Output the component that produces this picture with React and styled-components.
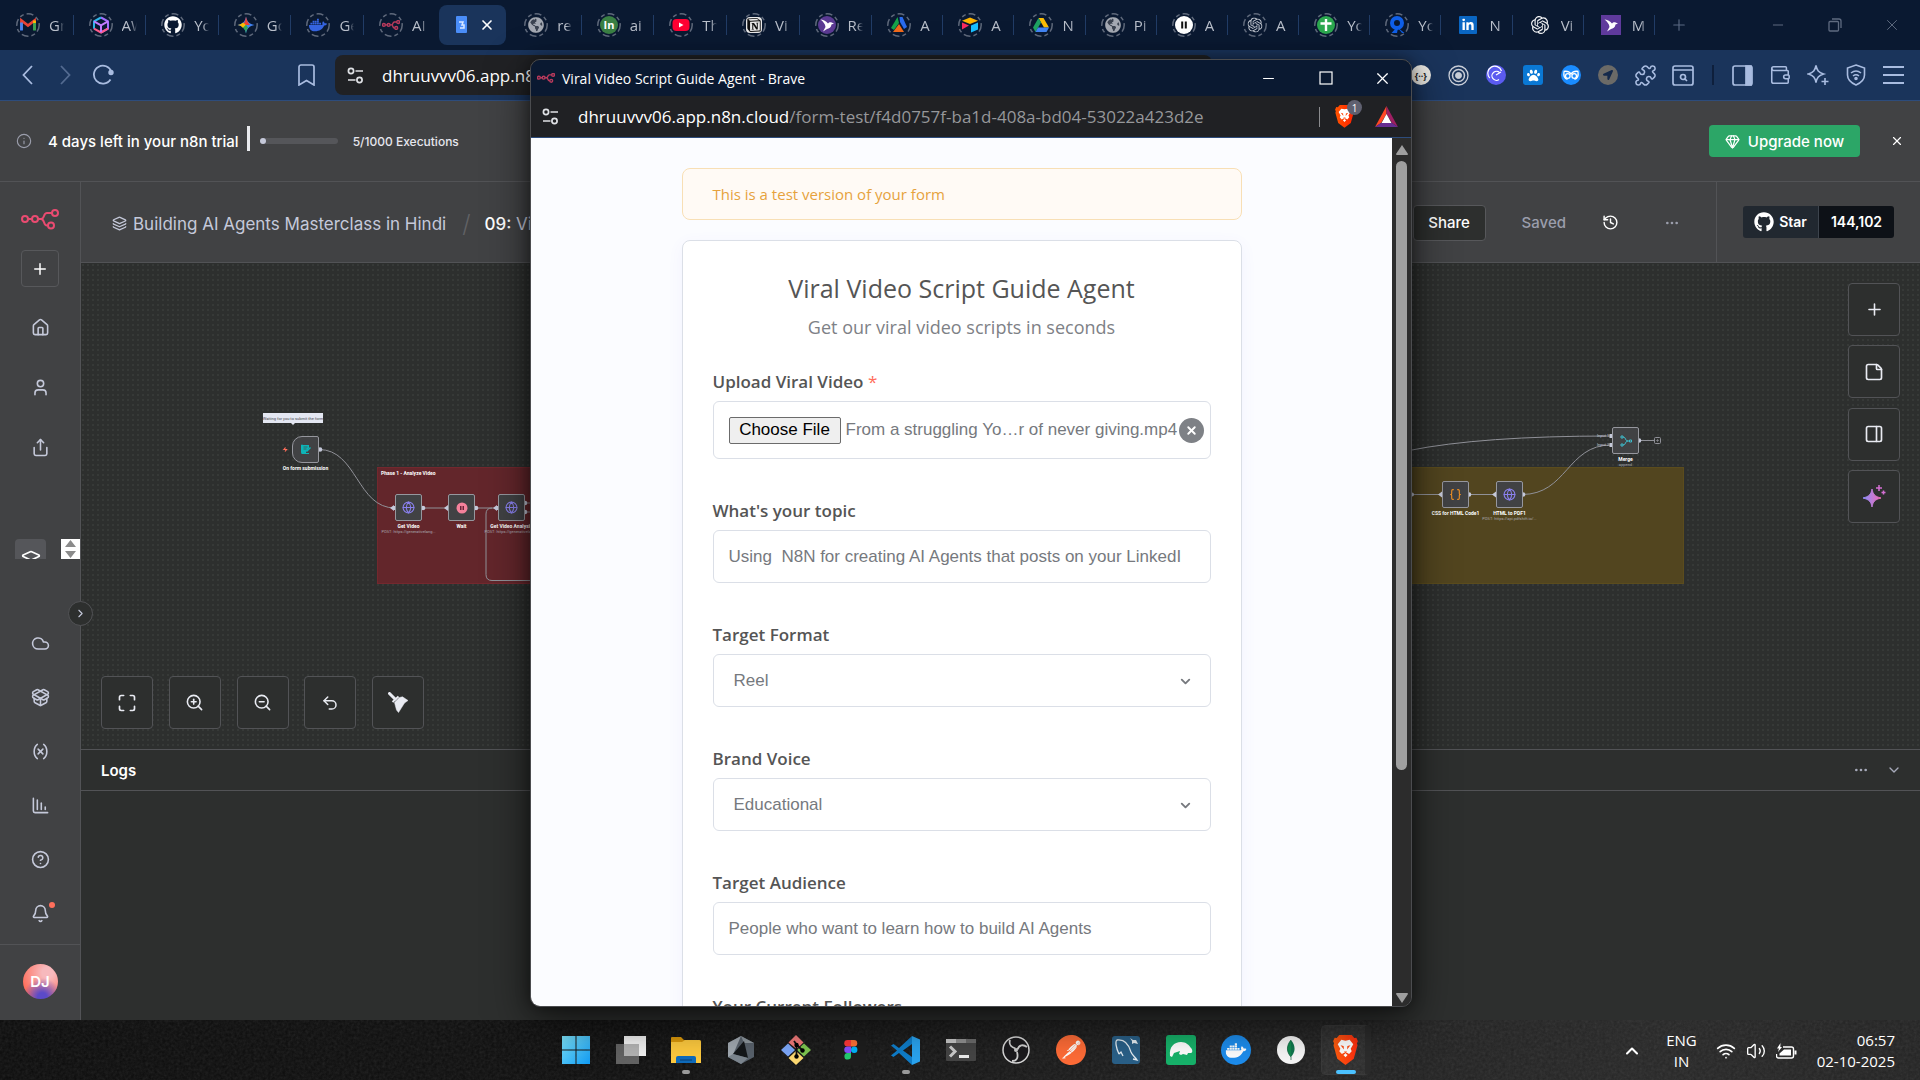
import React from "react";
import styled, { createGlobalStyle, css } from "styled-components";
import {
  Plus, House, User, Share, Layers, Cloud, PackageOpen, Variable, ChartColumnDecreasing,
  CircleHelp, Bell, ChevronRight, ChevronDown, ChevronUp, Info, Gem, X, History, Ellipsis,
  Maximize, ZoomIn, ZoomOut, Undo2, StickyNote, PanelRight, Globe, Braces, Puzzle, Wallet,
  Wifi, Volume2, Minus,
} from "lucide-react";
import { FaGithub, FaDocker, FaLinkedinIn, FaGlobeAmericas, FaPaw, FaLocationArrow } from "react-icons/fa";
import { SiOpenai, SiPostman, SiNotion } from "react-icons/si";

const ui = `"Open Sans", "Noto Sans", sans-serif`;
const inter = `Inter, Roboto, sans-serif`;

const GlobalStyle = createGlobalStyle`
  *, *::before, *::after { box-sizing: border-box; }
  html, body, #root { height: 100%; }
  body { margin: 0; background: #0c0c0c; overflow: hidden; }
  button, input, select { font: inherit; color: inherit; margin: 0; }
  button { border: 0; background: none; padding: 0; cursor: pointer; }
  svg { display: block; flex: none; }
`;

const center = css`display: flex; align-items: center; justify-content: center;`;

/* ---------- desktop ---------- */
const Desktop = styled.div`
  position: relative; height: 100vh; display: flex; flex-direction: column; overflow: hidden;
  font-family: ${ui};
`;
const Browser = styled.div`flex: 1; min-height: 0; display: flex; flex-direction: column; background: #414244;`;

/* ---------- tab strip ---------- */
const TabBar = styled.div`height: 50px; display: flex; background: #0a1931; padding-left: 1px;`;
const Tabs = styled.div`
  flex: 1; display: grid; grid-template-columns: repeat(12, 102fr) repeat(11, 100fr);
`;
const Tab = styled.button`
  min-width: 0; display: flex; align-items: center; padding-left: 15px; gap: 9px; position: relative;
  font-size: 15px; color: #b9bfca; text-align: left;
  &::after {
    content: ""; position: absolute; right: 0; top: 15px; height: 20px; width: 1px;
    background: ${(p) => (p.$bare ? "transparent" : "#213c66")};
  }
`;
const TabText = styled.span`
  width: 15px; overflow: hidden; white-space: nowrap; flex: none;
  mask-image: linear-gradient(90deg, #000 60%, transparent);
`;
const ActiveTab = styled(Tab)`
  margin: 5px 3px 5px 2px; padding: 0 14px 0 16px; gap: 12px; border-radius: 8px; background: #1a345b; color: #fff;
`;
const NewTab = styled.button`${center} width: 48px; color: #5b6a84;`;
const WindowButtons = styled.div`display: flex; padding-left: ${(p) => p.$lead || 0}px;`;
const WindowButton = styled.button`${center} width: 57px; color: ${(p) => p.$color};`;

/* ---------- toolbar ---------- */
const Toolbar = styled.div`
  height: 51px; display: flex; align-items: center; background: #1a345b; border-bottom: 1px solid #2d4c7c; color: #a9bce0;
`;
const NavButtons = styled.div`display: flex; padding-left: 8px;`;
const ToolButton = styled.button`${center} width: 38px; height: 38px; opacity: ${(p) => (p.$dim ? 0.4 : 1)};`;
const BookmarkSlot = styled(ToolButton)`margin-left: 165px;`;
const UrlPill = styled.div`
  flex: 1; margin-left: 10px; margin-right: 190px; height: 40px; border-radius: 8px; background: #202124; color: #fff;
  display: flex; align-items: center; gap: 18px; padding-left: 12px; font-size: 17px;
`;
const IconGrid = styled.div`
  display: grid; grid-template-columns: repeat(${(p) => p.$n}, 1fr); width: ${(p) => p.$w}px; margin-right: ${(p) => p.$mr || 0}px;
  justify-items: center; align-items: center;
`;
const ToolSep = styled.span`width: 2px; height: 20px; background: #0e1f3c; margin: 0 10px;`;
const Badge = styled.span`
  ${center} width: 20px; height: 20px; border-radius: ${(p) => (p.$square ? 3 : 10)}px; background: ${(p) => p.$bg}; color: ${(p) => p.$fg || "#fff"};
  font-size: 9px; font-weight: 700;
`;

/* ---------- n8n shell ---------- */
const Banner = styled.div`
  height: 81px; display: flex; align-items: center; border-bottom: 1px solid #525356; padding: 0 16px; color: #fff; font-family: ${inter};
`;
const TrialText = styled.span`margin-left: 16px; font-size: 15px; font-weight: 500;`;
const Caret = styled.span`width: 3px; height: 25px; background: #e9eaee; margin: 0 10px 6px 8px;`;
const Progress = styled.div`width: 78px; height: 6px; border-radius: 3px; background: #55565a; margin-right: 15px;`;
const ProgressFill = styled.div`height: 6px; border-radius: 3px; background: #c5c9da;`;
const Executions = styled.span`font-size: 12px; font-weight: 500; color: #e6e7ee;`;
const Upgrade = styled.button`
  ${center} gap: 8px; margin-left: auto; width: 151px; height: 32px; border-radius: 4px; background: #2ca667; font-size: 15px; font-weight: 500;
`;
const CloseBanner = styled.button`${center} width: 24px; height: 24px; margin-left: 25px; margin-right: -5px;`;

const Shell = styled.div`flex: 1; min-height: 0; display: flex;`;
const Sidebar = styled.nav`
  width: 81px; flex: none; border-right: 1px solid #525356; display: flex; flex-direction: column; align-items: center; color: #c5c9da;
  position: relative;
`;
const Logo = styled.div`height: 68px; padding-top: 27px;`;
const AddButton = styled.button`${center} width: 38px; height: 37px; border: 1px solid #57585b; border-radius: 4px; color: #fff;`;
const NavItem = styled.button`${center} width: 40px; height: ${(p) => p.$h}px; position: relative;`;
const NavTop = styled.div`padding-top: 10px; display: flex; flex-direction: column;`;
const NavClipped = styled.div`width: 80px; height: 20px; margin-top: 62px; padding-left: 15px; display: flex; justify-content: space-between; overflow: hidden;`;
const ClippedItem = styled.button`
  width: 31px; height: 36px; background: #55565a; border-radius: 4px; color: #fff; display: flex; justify-content: center; align-items: flex-start; padding-top: 11px;
`;
const Spinner = styled.div`width: 19px; height: 20px; background: #fff;`;
const NavBottom = styled.div`display: flex; flex-direction: column; margin-top: 57px; padding-bottom: 4px;`;
const Dot = styled.span`position: absolute; right: 5px; top: 16px; width: 6px; height: 6px; border-radius: 3px; background: #ff6f5c;`;
const UserSlot = styled.div`${center} width: 80px; flex: 1; border-top: 1px solid #525356; padding-bottom: 2px;`;
const Avatar = styled.button`
  width: 35px; height: 35px; border-radius: 50%; color: #fff; font: 600 15px ${inter};
  background: radial-gradient(circle at 55% 95%, #5b4ac8 0 12%, transparent 50%), radial-gradient(circle at 70% 25%, #f7b9bd 15%, #ff6f5c 75%);
`;
const Collapse = styled.button`
  ${center} position: absolute; right: -13px; top: 419px; width: 25px; height: 25px; border-radius: 50%;
  background: #2d2f2e; border: 1px solid #525356; z-index: 2;
`;

const Main = styled.main`flex: 1; min-width: 0; display: flex; flex-direction: column; font-family: ${inter};`;
const Header = styled.header`height: 81px; display: flex; border-bottom: 1px solid #525356; background: #414244; color: #c5c9da;`;
const Crumbs = styled.div`flex: 1; display: flex; align-items: center; padding: 3px 0 0 31px; gap: 6px; font-size: 17px; white-space: nowrap;`;
const Slash = styled.span`margin: 0 8px 0 10px; color: #606164; font-size: 24px; font-weight: 300;`;
const CrumbTitle = styled.span`color: #fff; font-weight: 500;`;
const CrumbRest = styled.span`color: #c5c9da; font-weight: 400;`;
const Actions = styled.div`display: flex; align-items: center; padding-top: 1px; font-size: 15px; font-weight: 500;`;
const ShareButton = styled.button`width: 73px; height: 36px; border: 1px solid #57585b; border-radius: 4px; background: #2d2f2e; color: #fff;`;
const Saved = styled.span`margin-left: 36px; color: #9b9eac;`;
const GhostButton = styled.button`${center} width: 24px; height: 24px; color: #fff; margin-left: ${(p) => p.$ml}px;`;
const StarPane = styled.div`${center} width: 204px; margin-left: 32px; padding-bottom: 1px; border-left: 1px solid #525356; font-size: 14px; font-weight: 600;`;
const StarButton = styled.a`${center} gap: 5px; width: 76px; height: 32px; background: #212830; color: #fff; text-decoration: none; border-radius: 3px 0 0 3px; border-right: 1px solid #3d444d;`;
const StarCount = styled.a`${center} width: 75px; height: 32px; background: #0d1117; color: #fff; text-decoration: none; border-radius: 0 3px 3px 0;`;

/* ---------- workflow canvas ---------- */
const Canvas = styled.section`
  height: 486px; position: relative; overflow: hidden; font-family: Roboto, sans-serif;
  background: #2d2f2e radial-gradient(circle at 2px 2px, #363937 1px, transparent 1px) 0 0 / 5px 5px;
`;
const Edges = styled.svg`position: absolute; inset: 0; width: 100%; height: 100%; z-index: 1;`;
const Sticky = styled.div`
  position: absolute; left: ${(p) => p.$x}px; top: 204px; width: ${(p) => p.$w}px; height: 117px;
  background: ${(p) => p.$bg}; border: 1px solid ${(p) => p.$line}; padding: 2px 3px; color: #fff; font-size: 5px; line-height: 6px; font-weight: 700;
`;
const NodeBox = styled.div`
  ${center} position: absolute; left: ${(p) => p.$x}px; top: ${(p) => p.$y}px; width: 27px; height: 27px; z-index: 2;
  background: #414244; border: 1px solid #96979e; border-radius: ${(p) => (p.$trigger ? "10px 2px 2px 10px" : "2px")};
`;
const NodeLabel = styled.div`
  position: absolute; top: 28px; left: 50%; transform: translateX(-50%); white-space: nowrap; text-align: center;
  font-size: 5px; line-height: 6px; font-weight: 700; color: #fff;
`;
const NodeSub = styled.div`font-size: 4px; font-weight: 400; color: #aaaab2;`;
const Tip = styled.div`
  ${center} position: absolute; left: 182px; top: 150px; width: 60px; height: 10px; background: #e4e7f2; color: #44454c; font-size: 4px; white-space: nowrap;
  &::after { content: ""; position: absolute; left: 28px; top: 10px; border: 2px solid transparent; border-top-color: #e4e7f2; }
`;
const BottomControls = styled.div`position: absolute; left: 20px; bottom: 20px; width: 323px; display: flex; justify-content: space-between;`;
const SideControls = styled.div`position: absolute; right: 20px; top: 20px; height: 240px; display: flex; flex-direction: column; justify-content: space-between;`;
const ControlButton = styled.button`${center} width: 52px; height: 53px; border: 1px solid #525356; border-radius: 4px; background: #2d2f2e; color: #e9ebf2;`;

const Logs = styled.section`flex: 1; background: #2d2f2e; border-top: 1px solid #525356;`;
const LogsHeader = styled.div`height: 41px; display: flex; align-items: center; padding: 0 14px 0 20px; border-bottom: 1px solid #525356; color: #c5c9da;`;
const LogsTitle = styled.h2`margin: 0 auto 0 0; font-size: 15px; font-weight: 600; color: #fff;`;

/* ---------- popup window ---------- */
const Popup = styled.div`
  position: absolute; left: 530px; top: 59px; width: 882px; height: 948px; z-index: 10; border: 1px solid #4b4c4f; border-radius: 10px; overflow: hidden;
  display: flex; flex-direction: column; background: #2c2c2c; box-shadow: 0 14px 44px rgba(0, 0, 0, 0.6), 0 0 14px rgba(0, 0, 0, 0.4);
`;
const TitleBar = styled.div`height: 36px; flex: none; display: flex; background: #0a1931; color: #fff; font-size: 14px; align-items: stretch;`;
const TitleText = styled.div`flex: 1; display: flex; align-items: center; gap: 7px; padding-left: 6px;`;
const AddressBar = styled.div`
  height: 42px; flex: none; display: flex; align-items: center; padding: 0 13px 0 11px; background: #202124; border-bottom: 1px solid #2d4c7c; font-size: 17px; color: #fff;
`;
const Address = styled.span`margin-left: 19px; flex: 1; white-space: nowrap;`;
const Path = styled.span`color: #96979a;`;
const AddressSep = styled.span`width: 1px; height: 20px; background: #8a8b8e; margin-right: 15px;`;
const Shield = styled.button`position: relative; margin-right: 21px;`;
const ShieldCount = styled.span`${center} position: absolute; left: 12px; top: -5px; width: 15px; height: 15px; border-radius: 8px; background: #5f6070; color: #fff; font-size: 10px;`;
const Body = styled.div`flex: 1; min-height: 0; display: flex;`;
const Page = styled.div`
  flex: 1; overflow: hidden; background: #fbfcff; padding-top: 30px; display: flex; flex-direction: column; align-items: center; font-family: "Open Sans", sans-serif;
`;
const Scroll = styled.div`width: 19px; display: flex; flex-direction: column; align-items: center; background: #2c2c2c; padding: 7px 0 3px;`;
const Thumb = styled.div`width: 11px; height: 609px; margin: 6px 0 auto; border-radius: 6px; background: #9f9f9f;`;
const TestNote = styled.div`
  width: 560px; height: 52px; flex: none; display: flex; align-items: center; padding-left: 30px; border: 1px solid #f8dfb5; border-radius: 8px; background: #fffaf5; color: #e6a23d; font-size: 15px;
`;
const Card = styled.form`
  width: 560px; flex: none; margin-top: 20px; padding: 30px; border: 1px solid #dbdfe7; border-radius: 8px; background: #fff; box-shadow: 0 4px 16px rgba(99, 77, 255, 0.06); color: #555;
`;
const Title = styled.h1`margin: 0 0 10px; font-size: 25px; line-height: 34px; font-weight: 400; text-align: center;`;
const Subtitle = styled.p`margin: 0 0 30px; font-size: 18px; line-height: 24px; text-align: center; color: #7e8186;`;
const Field = styled.div`margin-bottom: 39px; position: relative;`;
const Label = styled.label`display: block; line-height: 26px; margin-bottom: 6px; font-size: 17px; font-weight: 600;`;
const Required = styled.span`color: #ff6d5a; font-weight: 400;`;
const box = css`
  width: 100%; height: 53px; border: 1px solid #dbdfe7; border-radius: 6px; background: #fff; color: #76797e; font-family: "Liberation Sans", Arial, sans-serif; font-size: 17px; outline: 0;
`;
const Input = styled.input`${box} padding: 0 15px;`;
const Select = styled.select`${box} appearance: none; padding: 0 20px;`;
const SelectArrow = styled.span`position: absolute; right: 18px; top: 52px; color: #76797e; pointer-events: none;`;
const FileBox = styled.div`${box} height: 58px; display: flex; align-items: center; padding: 0 5px 0 15px; position: relative; overflow: hidden;`;
const HiddenFile = styled.input`position: absolute; opacity: 0; width: 1px; height: 1px;`;
const ChooseFile = styled.label`${center} width: 112px; height: 27px; flex: none; border: 1px solid #6b6b6b; border-radius: 2px; background: #efefef; color: #000;`;
const FileName = styled.span`flex: 1; min-width: 0; margin-left: 5px; white-space: nowrap; overflow: visible;`;
const ClearFile = styled.button`${center} position: absolute; right: 6px; top: 16px; width: 25px; height: 25px; border-radius: 50%; background: #7e8186; color: #fff;`;

/* ---------- taskbar ---------- */
const Taskbar = styled.footer`
  position: relative; height: 60px; flex: none; display: flex; align-items: center; justify-content: center; color: #fff;
  background: linear-gradient(90deg, #0b0b0b 0, #0e0e0e 34%, #171717 52%, #202020 72%, #262626 86%, #222 100%);
`;
const Grain = styled.svg`position: absolute; inset: 0; width: 100%; height: 100%; opacity: 0.12; pointer-events: none;`;
const Apps = styled.div`display: flex; padding-left: 1px;`;
const AppButton = styled.button`
  ${center} position: relative; width: 55px; height: 60px;
  &::after {
    content: ""; position: absolute; bottom: 6px; left: 50%; height: 4px; border-radius: 2px; transform: translateX(-50%);
    width: ${(p) => (p.$state === "focus" ? 20 : p.$state === "open" ? 8 : 0)}px;
    background: ${(p) => (p.$state === "focus" ? "#4cc2ff" : "#9a9a9a")};
  }
`;
const FocusPlate = styled.span`
  position: absolute; left: 3px; top: 5px; width: 50px; height: 50px; border: 1px solid #3a3a3a; border-radius: 5px; background: rgba(255, 255, 255, 0.06);
  border-right-width: 6px; border-right-color: #2c2c2c;
`;
const Tray = styled.div`position: absolute; right: 25px; top: 1px; height: 60px; display: flex; align-items: center; font-size: 15px; line-height: 21px;`;
const Lang = styled.div`text-align: center; margin: 0 19px 0 24px;`;
const TrayIcons = styled.div`display: flex; gap: 10px; margin-right: 20px; align-items: center;`;
const Clock = styled.div`text-align: right;`;

/* ---------- drawings ---------- */
const N8n = ({ w = 38, c = "#ea4b71", s = 2 }) => (
  <svg width={w} height={w * 0.54} viewBox="0 0 38 20.5" fill="none" stroke={c} strokeWidth={s}>
    <circle cx="4" cy="10" r="3" /><circle cx="14" cy="10" r="3" /><circle cx="34" cy="4" r="3" /><circle cx="30" cy="16.5" r="3" />
    <path d="M7 10h4M17 10h3c4 0 2-6 6-6h5M20 10c4 0 2 6.500 6 6.500h1" />
  </svg>
);
const Tune = () => (
  <svg width="17" height="17" viewBox="0 0 17 17" fill="none" stroke="#dfe1e5" strokeWidth="1.700">
    <circle cx="4" cy="4" r="2.600" /><path d="M8.500 4H16M1 13h7.500" /><circle cx="12.500" cy="13" r="2.600" />
  </svg>
);
const Ring = ({ children }) => (
  <svg width="24" height="24" viewBox="0 0 24 24">
    <circle cx="12" cy="12" r="11.200" fill="none" stroke="#5f697b" strokeWidth="1.500" strokeDasharray="7 3 4 3" />
    {children}
  </svg>
);
const ico = (C, color, size = 15) => <C x={(24 - size) / 2} y={(24 - size) / 2} size={size} color={color} width={size} height={size} />;
const Bird = () => <path d="M5.500 6.500c2 .2 5.500 1.300 7.500 4 .8-1.200 2-1.500 3-1.200l3 1.200-2.500 1c-.4 3-2.500 4-4.500 4.500l-4 2.500 2.500-4.500c-.2-3-2.500-5.500-5-7.500z" fill="#fff" />;
const GlobeIcon = () => <Ring><circle cx="12" cy="12" r="8" fill="#3b4351" />{ico(FaGlobeAmericas, "#a4a9b3", 16)}</Ring>;

const BraveLion = ({ w = 24 }) => (
  <svg width={w} height={w * 1.2} viewBox="0 0 24 29">
    <defs><linearGradient id="brv"><stop offset="0" stopColor="#ff5500" /><stop offset="1" stopColor="#ff2000" /></linearGradient></defs>
    <path d="M6 0h12l2.500 3 2-.4 1.500 3.400-1 2 .6 2L20 23l-8 6-8-6L.4 10 1 8 0 6l1.500-3.400 2 .4z" fill="url(#brv)" />
    <path d="M8 4.700l4 .8 4-.8 3.500 4.300-2.500 4.300 1 2.400-2.500 2.600-2.500-1.300-1 .8 2 1.500-2 2.200-2-2.200 2-1.500-1-.8-2.500 1.300L6 15.700l1-2.400L4.500 9z" fill="#fff" />
    <path d="M7.200 9.800l3 .9.300 3.200zM16.800 9.800l-3 .9-.3 3.200zM10.500 16h3L12 17.600z" fill="#ff4000" />
  </svg>
);
const Bat = () => (
  <svg width="23" height="21" viewBox="0 0 23 21">
    <path d="M11.500 0L0 21l6-4 5.500-9z" fill="#ff4724" /><path d="M11.500 0L23 21l-6-4-5.500-9z" fill="#9e1f63" /><path d="M0 21h23l-6-4H6z" fill="#662d91" /><path d="M11.500 8L6.500 17h10z" fill="#fff" />
  </svg>
);

const tabs = [
  ["Gmail", <Ring><path d="M5.500 17V7.500L12 12.500l6.500-5V17" fill="none" stroke="#ea4335" strokeWidth="2.800" /><path d="M5.500 17.500V9.500" stroke="#4285f4" strokeWidth="2.800" /><path d="M18.500 17.500V9.500" stroke="#34a853" strokeWidth="2.800" /><path d="M18.500 10V7.500" stroke="#fbbc04" strokeWidth="2.800" /></Ring>],
  ["AWS", <Ring><g fill="none" strokeWidth="2"><path d="M12 4.500l7 3.800v7.400l-7 3.800" stroke="#a56eff" /><path d="M12 4.500L5 8.300v7.400" stroke="#2fb5e8" /><path d="M5 15.700l7 3.800 7-3.800" stroke="#ff5c8a" /><path d="M5 8.300l7 4 7-4M12 12.300v7" stroke="#c47bff" /></g></Ring>],
  ["Your", <Ring>{ico(FaGithub, "#fff", 18)}</Ring>],
  ["Google", <Ring><path d="M12 3.500c.8 5 3.500 7.700 8.500 8.500-5 .8-7.700 3.500-8.500 8.500-.8-5-3.500-7.700-8.500-8.500 5-.8 7.700-3.500 8.500-8.500z" fill="#4285f4" /><path d="M12 3.500c.8 5 3.500 7.700 4 8.500h-8c2-1 3.500-4 4-8.500z" fill="#ea4335" /><path d="M3.500 12c2-.3 4-1 5.500-2.500l3 2.500-3 3c-1.500-2-3.500-2.700-5.500-3z" fill="#fbbc04" /><path d="M12 20.500c-.3-2.500-1-4-3-5.700l3-3 2 2.700c-1 1.500-1.700 3-2 6z" fill="#34a853" /></Ring>],
  ["Get", <Ring>{ico(FaDocker, "#3564e0", 18)}</Ring>],
  ["AI", <Ring><svg x="3" y="7" width="18" height="10" viewBox="0 0 38 20.500" fill="none" stroke="#b93a5c" strokeWidth="3"><circle cx="4" cy="10" r="3" /><circle cx="14" cy="10" r="3" /><circle cx="34" cy="4" r="3" /><circle cx="30" cy="16.500" r="3" /><path d="M7 10h4M17 10h3c4 0 2-6 6-6h5M20 10c4 0 2 6.500 6 6.500h1" /></svg></Ring>],
  null,
  ["re", <GlobeIcon />],
  ["ai", <Ring><circle cx="12" cy="12" r="9" fill="#3a8044" /><text x="12" y="16" textAnchor="middle" fill="#fff" fontSize="11" fontWeight="700">In</text></Ring>],
  ["The", <Ring><rect x="3.500" y="6" width="17" height="12" rx="4" fill="#ff0033" /><path d="M10 9.500v5l4.500-2.500z" fill="#fff" /></Ring>],
  ["Vi", <Ring><rect x="4" y="4" width="16" height="16" rx="4" fill="#e9e9e9" />{ico(SiNotion, "#111", 14)}</Ring>],
  ["Re", <Ring><circle cx="12" cy="12" r="9" fill="#5b3a93" /><Bird /></Ring>],
  ["A", <Ring><path d="M10.500 4L4 15l3 2 5-7z" fill="#17a34a" /><path d="M12.500 4h3L20 14l-3 2-4-7z" fill="#2a6cf0" /><path d="M12 11l5 8H6z" fill="#f26a1b" /></Ring>],
  ["A", <Ring><path d="M12 4.500l8 3.200-8 3.300-8-3.300z" fill="#fcb400" /><path d="M13 12.500l7-3v7l-7 3z" fill="#18bfff" /><path d="M4 9.500l7 3-7 4z" fill="#f82b60" /></Ring>],
  ["N", <Ring><path d="M9.500 5h5l5.500 9.500h-5z" fill="#fbbc04" /><path d="M9.500 5L4 14.500 6.500 19 12 9.500z" fill="#1ea362" /><path d="M9 14.500h11L17.500 19h-11z" fill="#4285f4" /></Ring>],
  ["Pi", <GlobeIcon />],
  ["A", <Ring><circle cx="12" cy="12" r="9" fill="#fff" /><path d="M10.200 8.500v7M13.800 8.500v7" stroke="#111" strokeWidth="2" /></Ring>],
  ["A", <Ring>{ico(SiOpenai, "#c3c8d1", 15)}</Ring>],
  ["Yo", <Ring><circle cx="12" cy="12" r="9" fill="#2ca84f" /><path d="M12 6v12M6.500 10.500h11" stroke="#fff" strokeWidth="2.400" /></Ring>],
  ["Yo", <Ring><circle cx="12" cy="10" r="5" fill="none" stroke="#0f5fe8" strokeWidth="4" /><path d="M12 14l-5.500 6H12l1-5 4 5h2.500z" fill="#0f5fe8" /></Ring>],
  ["N", <svg width="24" height="24"><rect x="3" y="3" width="18" height="18" rx="1" fill="#0a66c2" />{ico(FaLinkedinIn, "#fff", 13)}</svg>],
  ["Vi", <svg width="24" height="24">{ico(SiOpenai, "#f2f3f5", 18)}</svg>],
  ["M", <svg width="24" height="24"><rect x="2" y="2" width="20" height="20" fill="#5f3a9c" /><Bird /></svg>],
];

const winLogo = <svg width="30" height="30" viewBox="0 0 30 30"><defs><linearGradient id="w" x2="1" y2="1"><stop offset="0" stopColor="#7fe6fd" /><stop offset="1" stopColor="#109cf5" /></linearGradient></defs><path fill="url(#w)" d="M1 1h13.500v13.500H1zM15.500 1H29v13.500H15.500zM1 15.500h13.500V29H1zM15.500 15.500H29V29H15.500z" /></svg>;
const taskApps = [
  ["Start", winLogo],
  ["Task view", <svg width="32" height="30" viewBox="0 0 32 30"><rect x="9" y="1" width="22" height="20" fill="#f3f3f3" /><rect x="1" y="9" width="23" height="20" fill="#777" fillOpacity=".8" /><path d="M9 9h15v12H9z" fill="#b5b5b5" /></svg>],
  ["File Explorer", <svg width="30" height="28" viewBox="0 0 30 28"><path d="M0 2a1 1 0 011-1h9l3 3h15a2 2 0 012 2v4H0z" fill="#dd9a0b" /><path d="M0 6h11l3-2h14a2 2 0 012 2v21H0z" fill="#ffcb3f" /><path d="M5 27v-5a2 2 0 012-2h16a2 2 0 012 2v5z" fill="#0f6cbd" /><path d="M9 24h12" stroke="#0a3f74" /></svg>, "open"],
  ["Cursor", <svg width="26" height="28" viewBox="0 0 26 28"><path d="M13 0l13 7v14l-13 7L0 21V7z" fill="#59626c" /><path d="M13 0l13 7-10 0z" fill="#8f989f" /><path d="M13 0L4 21l-4 0V7z" fill="#a2aab2" /><path d="M16 5l4 17-15-4z" fill="#14171a" /><path d="M0 21l5-3 15 4-7 6z" fill="#7d8790" /></svg>],
  ["Git", <svg width="32" height="32" viewBox="0 0 32 32"><path d="M16 1l7.500 7.500-7 6.500-8-6.500z" fill="#f57b7b" /><path d="M8 9.500l7 6.500-7 6.500L1 16z" fill="#7ea9fb" /><path d="M24 9.500l7 6.500-7 6.500-7-6.500z" fill="#7fc750" /><path d="M16 17l7.500 7L16 31l-7.500-7z" fill="#ffdb72" /><path d="M14 7l2.500 3.500v12M16.500 10.500l6 6" stroke="#111" strokeWidth="1.800" fill="none" /><circle cx="16.500" cy="11" r="2.200" /><circle cx="16.500" cy="22.500" r="2.200" /><circle cx="22.500" cy="16.500" r="2.200" /></svg>],
  ["Figma", <svg width="30" height="30" viewBox="0 0 30 30"><rect width="30" height="30" rx="2" fill="#1e1e1e" /><path d="M15 5h-3.500a3.200 3.200 0 000 6.500H15z" fill="#ff3737" /><path d="M15 5h3a3.200 3.200 0 010 6.500h-3z" fill="#ff7237" /><path d="M15 11.500h-3.500a3.200 3.200 0 000 6.500H15z" fill="#874fff" /><circle cx="18.200" cy="14.700" r="3.200" fill="#00b6ff" /><path d="M11.500 18H15v3.300a3.300 3.300 0 11-3.500-3.300z" fill="#24cb71" /></svg>],
  ["VS Code", <svg width="31" height="31" viewBox="0 0 31 31"><path d="M22 1L9 13 3.500 9 1 10.500 7 15.500 1 20.500 3.500 22 9 18l13 12V22l-9-6.500L22 9z" fill="#0f7ecb" /><path d="M22 1l8 3.500v22L22 30z" fill="#2aa4f0" /></svg>, "open"],
  ["Terminal", <svg width="30" height="24" viewBox="0 0 30 24"><rect y="1" width="30" height="22" rx="1" fill="#454545" /><path d="M0 1h10v4H0z" fill="#c8c8c8" /><path d="M10 1h10v4H10z" fill="#929292" /><path d="M20 1h10v4H20z" fill="#6c6c6c" /><path d="M4 8.500l5 5-5 5" stroke="#ccc" strokeWidth="3" fill="none" /><path d="M13 18.500h10" stroke="#eee" strokeWidth="3" /></svg>],
  ["OBS", <svg width="30" height="30" viewBox="0 0 30 30"><circle cx="15" cy="15" r="13" fill="#1b1a1d" stroke="#d9d9d9" strokeWidth="1.500" /><path d="M9 5c-1.500 5 1 7 5.500 8.500M26 12c-4-3-8-2-9.500 2.500M11 26c5 0 6.500-3.500 5-9" stroke="#d0d0d0" strokeWidth="1.800" fill="none" /><circle cx="15" cy="15" r="2" fill="#ccc" /></svg>],
  ["Postman", <svg width="30" height="30" viewBox="0 0 30 30"><circle cx="15" cy="15" r="14" fill="#fff" /><SiPostman size={30} color="#ff6c37" /></svg>],
  ["MySQL", <svg width="28" height="28" viewBox="0 0 28 28"><rect width="28" height="28" rx="3" fill="#2a6088" /><path d="M7 18C4 12 3 5 5 4c8-1 12 5 14 12 1 3 4 5 6 8l-4-1M7 18l2-2 2 4" stroke="#e5edf3" strokeWidth="1.300" fill="none" /><path d="M18 2l3 2 3 0 2 4-4-1-2 1 0-3z" fill="#e5edf3" /></svg>],
  ["Studio", <svg width="30" height="30" viewBox="0 0 30 30"><rect width="30" height="30" rx="3" fill="#17b26a" /><path d="M4 21C3 12 8 7 15 7c5 0 8 3 10 6 2 2 1.500 5 0 5l-3 0-1 2-4-1-2 1-2-1 1-3-6 2-2 4z" fill="#fff" /></svg>],
  ["Docker", <svg width="30" height="30" viewBox="0 0 30 30"><circle cx="15" cy="15" r="15" fill="#1d8ded" /><svg x="4.500" y="5"><FaDocker size={21} color="#fff" /></svg></svg>],
  ["MongoDB", <svg width="28" height="28" viewBox="0 0 28 28"><circle cx="14" cy="14" r="14" fill="#f7f7f7" /><path d="M14 4c5 6 4.500 12 0 17-4.500-5-5-11 0-17z" fill="#10774e" /><path d="M14 4c-5 6-4.500 12 0 17v3" fill="#13aa52" fillOpacity=".4" stroke="#0b5a3a" strokeWidth=".7" /></svg>],
  ["Brave", <BraveLion w={25} />, "focus"],
];

const GlobeNode = () => <Globe size={13} color="#8a80ee" />;

const Node = ({ x, y, trigger, label, sub, children }) => (
  <NodeBox $x={x} $y={y} $trigger={trigger}>
    {children}
    <NodeLabel>{label}{sub && <NodeSub>{sub}</NodeSub>}</NodeLabel>
  </NodeBox>
);

function BrowserChrome() {
  return (
    <>
      <TabBar>
        <Tabs>
          {tabs.map((t, i) =>
            t ? (
              <Tab key={i} $bare={i === 5}>{t[1]}<TabText>{t[0]}</TabText></Tab>
            ) : (
              <ActiveTab key={i} $bare aria-label="Current tab">
                <svg width="12" height="18"><rect width="11" height="17" x="1" rx="1" fill="#4a8df8" /><path d="M4 6h4l-1 3h2v3H5" stroke="#dce9ff" fill="none" strokeWidth="1.500" /></svg>
                <X size={16} strokeWidth={2.500} />
              </ActiveTab>
            )
          )}
        </Tabs>
        <NewTab aria-label="New tab"><Plus size={18} strokeWidth={1.500} /></NewTab>
        <WindowButtons $lead={46}>
          <WindowButton $color="#5f6b80" aria-label="Minimize"><Minus size={16} strokeWidth={1.500} /></WindowButton>
          <WindowButton $color="#5f6b80" aria-label="Restore">
            <svg width="14" height="14" fill="none" stroke="currentColor" strokeWidth="1.300"><rect x="1" y="3.500" width="9.500" height="9.500" rx="1" /><path d="M4 1h7q2 0 2 2v7" /></svg>
          </WindowButton>
          <WindowButton $color="#5f6b80" aria-label="Close"><X size={18} strokeWidth={1.300} /></WindowButton>
        </WindowButtons>
      </TabBar>
      <Toolbar>
        <NavButtons>
          <ToolButton aria-label="Back"><svg width="11" height="20" fill="none" stroke="currentColor" strokeWidth="1.800"><path d="M10 1L1.500 10 10 19" /></svg></ToolButton>
          <ToolButton $dim aria-label="Forward"><svg width="11" height="20" fill="none" stroke="currentColor" strokeWidth="1.800"><path d="M1 1l8.500 9L1 19" /></svg></ToolButton>
          <ToolButton aria-label="Reload"><svg width="22" height="22" fill="none" stroke="currentColor" strokeWidth="1.800"><path d="M18.500 15.500A9 9 0 1119.500 8" /><circle cx="19" cy="8.500" r="1.800" fill="currentColor" /></svg></ToolButton>
        </NavButtons>
        <BookmarkSlot aria-label="Bookmark"><svg width="17" height="22" fill="none" stroke="currentColor" strokeWidth="1.700"><path d="M1 3a2 2 0 012-2h11a2 2 0 012 2v18l-7.500-4.500L1 21z" /></svg></BookmarkSlot>
        <UrlPill><Tune />dhruuvvv06.app.n8n.cloud</UrlPill>
        <IconGrid $n={8} $w={300}>
          <Badge $bg="#e9e7e1" $fg="#222">{"{··}"}</Badge>
          <svg width="21" height="21" fill="none" stroke="#c9ced8"><circle cx="10.500" cy="10.500" r="9.500" strokeWidth="1.300" /><circle cx="10.500" cy="10.500" r="6" strokeWidth="1.500" /><circle cx="10.500" cy="10.500" r="3" fill="#c9ced8" /></svg>
          <svg width="20" height="20" viewBox="0 0 20 20"><circle cx="10" cy="10" r="10" fill="#5b5bf0" /><path d="M15.500 6A7 7 0 103.800 13M14 8a4.500 4.500 0 10-1 6.500M10 10l5-3" stroke="#fff" strokeWidth="1.200" fill="none" /></svg>
          <Badge $bg="#0a78d4" $square><FaPaw size={13} /></Badge>
          <svg width="20" height="20"><circle cx="10" cy="10" r="10" fill="#1a8cff" /><g fill="none" stroke="#fff" strokeWidth="1.300"><circle cx="6.800" cy="11" r="2.300" /><circle cx="13.200" cy="11" r="2.300" /><path d="M2.500 6.500q5-1 7.500 2.500 2.500-3.500 7.500-2.500M3 7q-1 6 3.500 7.500M17 7q1 6-3.500 7.500" /></g></svg>
          <Badge $bg="#6b6a67" $fg="#14294b"><FaLocationArrow size={10} /></Badge>
          <Puzzle size={23} strokeWidth={1.600} />
          <svg width="22" height="21" fill="none" stroke="currentColor" strokeWidth="1.700"><rect x="1" y="1" width="20" height="19" rx="2" /><path d="M1 5h20M12.500 13.500l2.500 2.500" /><circle cx="11" cy="12" r="2.500" /></svg>
        </IconGrid>
        <ToolSep />
        <IconGrid $n={5} $w={188} $mr={8}>
          <svg width="21" height="21" fill="none" stroke="currentColor" strokeWidth="1.700"><rect x="1" y="1" width="19" height="19" rx="2" /><path d="M14 1h5v19h-5z" fill="currentColor" /></svg>
          <Wallet size={22} strokeWidth={1.700} />
          <svg width="22" height="22" fill="none" stroke="currentColor" strokeWidth="1.600"><path d="M9 1.500c1 5 2.500 7 7.500 8.500-5 1.500-6.500 3.500-7.500 8.500-1-5-2.500-7-7.500-8.500 5-1.500 6.500-3.500 7.500-8.500zM18 14v7M14.500 17.500h7" /></svg>
          <svg width="20" height="22" fill="none" stroke="currentColor" strokeWidth="1.600"><path d="M10 1l8.500 3v7c0 5-4 8-8.500 10-4.500-2-8.500-5-8.500-10V4z" /><path d="M5 9q5-4 10 0M7 12q3-2.500 6 0" /><circle cx="10" cy="14.500" r="1" fill="currentColor" /></svg>
          <svg width="21" height="18" stroke="currentColor" strokeWidth="2"><path d="M0 1h21M0 9h21M0 17h21" /></svg>
        </IconGrid>
      </Toolbar>
    </>
  );
}

function Workflow() {
  return (
    <Canvas>
      <Sticky $x={296} $w={190} $bg="#63262b" $line="#73282e">Phase 1 - Analyze Video</Sticky>
      <Sticky $x={1300} $w={303} $bg="#52451f" $line="#5b4c1d" />
      <Edges fill="none" stroke="#909198" strokeWidth="1">
        <path d="M238 186.500C276 186.500 276 245 314 245M341 245h26M395 245h22M461 317.500h-50q-6 0-6-6V251q0-6 6-6M444 240h10M444 249h10" />
        <path d="M1328 187.500Q1400 173 1530 173M1441 231.500C1486 231.500 1486 182 1530 182M1331 231.500h30M1388 231.500h27M1558 177.500h15" />
        <rect x="1573.500" y="174.500" width="6" height="6" rx="1" /><path d="M1575 177.500h3M1576.500 176v3" strokeWidth=".6" />
        <g fill="#c5c9da" stroke="none">
          <circle cx="239" cy="186.500" r="2.300" /><circle cx="342" cy="245" r="2.300" /><circle cx="395" cy="245" r="2.300" /><circle cx="444" cy="240" r="2.300" /><circle cx="444" cy="249" r="2.300" />
          <circle cx="1388" cy="231.500" r="2.300" /><circle cx="1442" cy="231.500" r="2.300" /><circle cx="1558" cy="177.500" r="2.300" /><circle cx="1331" cy="231.500" r="2" />
          <path d="M309 245l4-3v6zM363 245l4-3v6zM412 245l4-3v6zM1357 231.500l4-3v6zM1411 231.500l4-3v6z" />
          <path d="M312 243h2v4h-2zM366 243h2v4h-2zM415 243h2v4h-2zM1360 229.500h2v4h-2zM1414 229.500h2v4h-2zM1528.500 171h3v4h-3zM1528.500 180h3v4h-3z" />
        </g>
        <g fill="#c5c9da" stroke="none" fontSize="4"><text x="1516" y="174">Input 1</text><text x="1516" y="183">Input 2</text></g>
        <path d="M204.500 184.500l-1.500 2h2.500l-1.500 2" stroke="#ff6d5a" strokeWidth="1.200" />
      </Edges>
      <Tip>Waiting for you to submit the form</Tip>
      <Node x={211} y={173} trigger label="On form submission">
        <svg width="11" height="11" viewBox="0 0 11 11"><path d="M1 1q1-1 2 0h6v3L6 8v1h3v1H2q-1 0-1-2z" fill="#0eb5b8" /><path d="M3.500 3h4M3.500 5h3" stroke="#414244" strokeWidth=".7" /><path d="M6.500 7.500L10.500 3.500" stroke="#0eb5b8" strokeWidth="1.500" /></svg>
      </Node>
      <Node x={314} y={231} label="Get Video" sub="POST: https://generativelang..."><GlobeNode /></Node>
      <Node x={367} y={231} label="Wait">
        <svg width="12" height="12"><circle cx="6" cy="6" r="5.500" fill="#f5819b" /><path d="M4 4h4v4H4z" fill="#6b2438" /><path d="M6 4v4" stroke="#f5819b" /></svg>
      </Node>
      <Node x={417} y={231} label="Get Video Analysis" sub="POST: https://generativelang..."><GlobeNode /></Node>
      <Node x={1361} y={218} label="CSS for HTML Code1"><Braces size={13} color="#f59324" /></Node>
      <Node x={1415} y={218} label="HTML to PDF1" sub="POST: https://api.pdfshift.io/..."><GlobeNode /></Node>
      <Node x={1531} y={164} label="Merge" sub="append">
        <svg width="12" height="12" fill="none" stroke="#3fbccb" strokeWidth="1"><path d="M1 1h2v2H1zM1 9h2v2H1zM9.500 5h2v2h-2zM3 2q2 0 2.500 2T8 6h1.500M3 10q2 0 2.500-2T8 6" /></svg>
      </Node>
      <BottomControls>
        <ControlButton aria-label="Fit view"><Maximize size={20} /></ControlButton>
        <ControlButton aria-label="Zoom in"><ZoomIn size={19} /></ControlButton>
        <ControlButton aria-label="Zoom out"><ZoomOut size={19} /></ControlButton>
        <ControlButton aria-label="Undo"><Undo2 size={18} /></ControlButton>
        <ControlButton aria-label="Tidy up">
          <svg width="21" height="21" viewBox="0 0 21 21" fill="none" stroke="currentColor"><path d="M1.500 1.500L7 7" strokeWidth="3" strokeLinecap="round" /><path d="M4.500 10L10.500 4.500" strokeWidth="2" /><path d="M6.500 10.500L11.500 5.500 14.500 4.800 20 8.500 16.500 11 10.500 20.500 8.500 18z" fill="currentColor" strokeWidth=".5" /></svg>
        </ControlButton>
      </BottomControls>
      <SideControls>
        <ControlButton aria-label="Add node"><Plus size={19} /></ControlButton>
        <ControlButton aria-label="Add note"><StickyNote size={20} /></ControlButton>
        <ControlButton aria-label="Toggle panel"><PanelRight size={20} /></ControlButton>
        <ControlButton aria-label="Ask assistant">
          <svg width="24" height="24" viewBox="0 0 24 24"><defs><linearGradient id="sp"><stop offset="0" stopColor="#8c8cf8" /><stop offset="1" stopColor="#ee6bb5" /></linearGradient></defs><path fill="url(#sp)" d="M10 5c1 5.500 3 7.500 9 9-6 1.500-8 3.500-9 9-1-5.500-3-7.500-9-9 6-1.500 8-3.500 9-9z" stroke="url(#sp)" /><path d="M17 1v6M14 4h6M21.500 6.500v4M19.500 8.500h4" stroke="#d56fd4" strokeWidth="1.500" /></svg>
        </ControlButton>
      </SideControls>
    </Canvas>
  );
}

function FormPopup() {
  return (
    <Popup>
      <TitleBar>
        <TitleText><N8n w={18} c="#b93a5c" s={3} />Viral Video Script Guide Agent - Brave</TitleText>
        <WindowButtons>
          <WindowButton $color="#fff" aria-label="Minimize"><Minus size={17} strokeWidth={1.500} /></WindowButton>
          <WindowButton $color="#fff" aria-label="Maximize"><svg width="14" height="14" fill="none" stroke="currentColor" strokeWidth="1.200"><rect x="1" y="1" width="12" height="12" /></svg></WindowButton>
          <WindowButton $color="#fff" aria-label="Close"><X size={19} strokeWidth={1.500} /></WindowButton>
        </WindowButtons>
      </TitleBar>
      <AddressBar>
        <Tune />
        <Address>dhruuvvv06.app.n8n.cloud<Path>/form-test/f4d0757f-ba1d-408a-bd04-53022a423d2e</Path></Address>
        <AddressSep />
        <Shield aria-label="Brave Shields"><BraveLion w={19} /><ShieldCount>1</ShieldCount></Shield>
        <Bat />
      </AddressBar>
      <Body>
        <Page>
          <TestNote>This is a test version of your form</TestNote>
          <Card>
            <Title>Viral Video Script Guide Agent</Title>
            <Subtitle>Get our viral video scripts in seconds</Subtitle>
            <Field>
              <Label htmlFor="video">Upload Viral Video <Required>*</Required></Label>
              <FileBox>
                <HiddenFile type="file" id="video" />
                <ChooseFile htmlFor="video">Choose File</ChooseFile>
                <FileName>From a struggling Yo…r of never giving.mp4</FileName>
                <ClearFile type="button" aria-label="Remove file"><X size={13} strokeWidth={3.500} /></ClearFile>
              </FileBox>
            </Field>
            <Field>
              <Label htmlFor="topic">What's your topic</Label>
              <Input id="topic" defaultValue="Using  N8N for creating AI Agents that posts on your LinkedI" />
            </Field>
            <Field>
              <Label htmlFor="format">Target Format</Label>
              <Select id="format"><option>Reel</option></Select>
              <SelectArrow><ChevronDown size={15} strokeWidth={3} /></SelectArrow>
            </Field>
            <Field>
              <Label htmlFor="voice">Brand Voice</Label>
              <Select id="voice"><option>Educational</option></Select>
              <SelectArrow><ChevronDown size={15} strokeWidth={3} /></SelectArrow>
            </Field>
            <Field>
              <Label htmlFor="audience">Target Audience</Label>
              <Input id="audience" defaultValue="People who want to learn how to build AI Agents" />
            </Field>
            <Field>
              <Label htmlFor="followers">Your Current Followers</Label>
              <Input id="followers" />
            </Field>
          </Card>
        </Page>
        <Scroll>
          <svg width="12" height="10"><path d="M6 0l6 9q0 1-1 1H1q-1 0-1-1z" fill="#9f9f9f" /></svg>
          <Thumb />
          <svg width="12" height="10"><path d="M6 10L0 1q0-1 1-1h10q1 0 1 1z" fill="#9f9f9f" /></svg>
        </Scroll>
      </Body>
    </Popup>
  );
}

export default function App() {
  return (
    <Desktop>
      <GlobalStyle />
      <Browser>
        <BrowserChrome />
        <Banner>
          <Info size={16} color="#9b9eac" strokeWidth={1.700} />
          <TrialText>4 days left in your n8n trial</TrialText>
          <Caret />
          <Progress><ProgressFill style={{ width: `${Math.max(8, 5 / 10)}%` }} /></Progress>
          <Executions>5/1000 Executions</Executions>
          <Upgrade><Gem size={15} />Upgrade now</Upgrade>
          <CloseBanner aria-label="Dismiss"><X size={14} /></CloseBanner>
        </Banner>
        <Shell>
          <Sidebar>
            <Logo><N8n /></Logo>
            <AddButton aria-label="Create"><Plus size={18} /></AddButton>
            <NavTop>
              <NavItem $h={60} aria-label="Overview"><House size={19} /></NavItem>
              <NavItem $h={60} aria-label="Personal"><User size={19} /></NavItem>
              <NavItem $h={60} aria-label="Shared"><Share size={19} /></NavItem>
            </NavTop>
            <NavClipped>
              <ClippedItem aria-label="Project"><Layers size={20} /></ClippedItem>
              <Spinner><svg width="19" height="20"><path d="M9.500 1l5.500 7H4zM9.500 19l5.500-7H4z" fill="#8b8b8b" /></svg></Spinner>
            </NavClipped>
            <NavBottom>
              <NavItem $h={54} aria-label="Admin"><Cloud size={19} /></NavItem>
              <NavItem $h={54} aria-label="Templates"><PackageOpen size={19} /></NavItem>
              <NavItem $h={54} aria-label="Variables"><Variable size={19} /></NavItem>
              <NavItem $h={54} aria-label="Insights"><ChartColumnDecreasing size={19} /></NavItem>
              <NavItem $h={54} aria-label="Help"><CircleHelp size={19} /></NavItem>
              <NavItem $h={54} aria-label="Updates"><Bell size={19} /><Dot /></NavItem>
            </NavBottom>
            <UserSlot><Avatar>DJ</Avatar></UserSlot>
            <Collapse aria-label="Expand"><ChevronRight size={13} /></Collapse>
          </Sidebar>
          <Main>
            <Header>
              <Crumbs>
                <Layers size={15} />Building AI Agents Masterclass in Hindi<Slash>/</Slash>
                <CrumbTitle>09: <CrumbRest>Vi</CrumbRest></CrumbTitle>
              </Crumbs>
              <Actions>
                <ShareButton>Share</ShareButton>
                <Saved>Saved</Saved>
                <GhostButton $ml={32} aria-label="History"><History size={17} /></GhostButton>
                <GhostButton $ml={38} aria-label="More"><Ellipsis size={16} color="#9b9eac" /></GhostButton>
              </Actions>
              <StarPane>
                <StarButton href="#star"><FaGithub size={20} />Star</StarButton>
                <StarCount href="#stars">144,102</StarCount>
              </StarPane>
            </Header>
            <Workflow />
            <Logs>
              <LogsHeader>
                <LogsTitle>Logs</LogsTitle>
                <GhostButton $ml={0} aria-label="Log options"><Ellipsis size={16} color="#a7aaba" /></GhostButton>
                <GhostButton $ml={9} aria-label="Collapse logs"><ChevronDown size={16} color="#a7aaba" /></GhostButton>
              </LogsHeader>
            </Logs>
          </Main>
        </Shell>
      </Browser>
      <FormPopup />
      <Taskbar>
        <Grain><filter id="grain"><feTurbulence type="fractalNoise" baseFrequency="0.35" numOctaves="2" /><feColorMatrix type="saturate" values="0" /></filter><rect width="100%" height="100%" filter="url(#grain)" /></Grain>
        <Apps>
          {taskApps.map(([name, icon, state]) => (
            <AppButton key={name} $state={state} aria-label={name}>{state === "focus" && <FocusPlate />}{icon}</AppButton>
          ))}
        </Apps>
        <Tray>
          <ChevronUp size={20} strokeWidth={2.500} />
          <Lang>ENG<br />IN</Lang>
          <TrayIcons>
            <Wifi size={20} />
            <Volume2 size={20} strokeWidth={1.600} />
            <svg width="21" height="17" viewBox="0 0 21 17" fill="none" stroke="#fff" strokeWidth="1.400"><path d="M7 4h8.500a2 2 0 012 2v7a2 2 0 01-2 2h-13a2 2 0 01-2-2v-2" /><path d="M8 6.500h7v6H3.500v-2z" fill="#fff" stroke="none" /><path d="M4.500 0L1 5.500h2L2 9l4-5H4.300z" fill="#fff" stroke="none" /><path d="M19.500 7.500v4" strokeWidth="2" /></svg>
          </TrayIcons>
          <Clock>06:57<br />02-10-2025</Clock>
        </Tray>
      </Taskbar>
    </Desktop>
  );
}
